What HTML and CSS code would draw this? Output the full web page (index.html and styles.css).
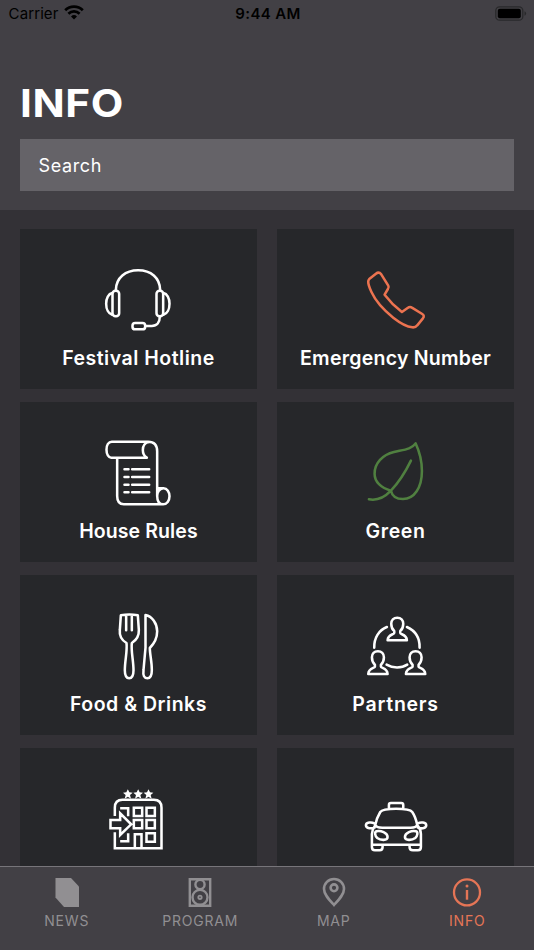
FILE: index.html
```
<!DOCTYPE html>
<html lang="en">
<head>
<meta charset="utf-8">
<title>Info</title>
<link rel="stylesheet" href="styles.css">
</head>
<body>
<div class="app">
  <header class="header">
    <div class="status">
      <div class="carrier"><span>Carrier</span>
        <svg class="wifi" width="20" height="15" viewBox="0 0 20 15"><g fill="none" stroke="#000" stroke-width="2.7"><path d="M1.2 5.3a12.4 12.4 0 0 1 17.6 0"/><path d="M4.4 8.7a8 8 0 0 1 11.2 0"/></g><path d="M10 14.6l-3-3.2a4.3 4.3 0 0 1 6 0z"/></svg>
      </div>
      <time class="time">9:44 AM</time>
      <svg class="battery" width="32" height="16" viewBox="0 0 32 16"><rect x=".8" y=".8" width="27" height="13.4" rx="3.8" fill="none" stroke="#29292b" stroke-width="1.3"/><rect x="2.8" y="2.7" width="23" height="9.6" rx="2" fill="#000"/><path d="M29.5 5.2q1.6.6 1.6 2.3t-1.6 2.3z" fill="#29292b"/></svg>
    </div>
    <h1 class="title">INFO</h1>
    <div class="search"><span>Search</span></div>
  </header>
  <main class="grid">
    <section class="card">
      <svg class="icon" viewBox="-4.5 -3 300 270"><path d="M79 105C80 68 108 46 146 46s65 22 66 59M68 114c-11 2-18 16-18 32s7 30 18 33M222 114c11 2 18 16 18 32s-7 30-18 33M211 184c0 18-9 29-24 29h-19"/><rect x="69" y="107" width="20" height="77" rx="9"/><rect x="201" y="107" width="20" height="77" rx="9"/><rect x="129" y="204" width="38" height="19" rx="8"/></svg>
      <h2 class="label hotline">Festival Hotline</h2>
    </section>
    <section class="card">
      <svg class="icon orange" viewBox="-12.75 -3 300 270"><path d="M58 71l19-15q9-7 16 2l21 34q3 5-1 10l-10 17q22 29 52 52l17-12q7-5 13-1l31 19q8 5 2 13l-17 21q-5 7-15 6c-19-2-39-15-57-29-29-23-53-50-65-76-6-13-11-25-10-33q1-5 4-8z"/></svg>
      <h2 class="label emergency">Emergency Number</h2>
    </section>
    <section class="card">
      <svg class="icon" viewBox="-4.5 6 300 270"><path d="M172 98H65c-8 0-14-10-14-24s6-24 16-24h109c18 0 27 10 27 29v133c0 16 6 26 18 26H103c-14 0-20-9-20-25V99M179 51c-12 1-19 11-19 24 0 11 4 18 12 23M204 190h18c11 0 18 11 18 24s-8 24-19 24M221 190c-11 2-18 12-18 24"/><path d="M105 133h12M128 133h51M105 156h12M128 156h51M105 179h12M128 179h51M105 202h12M128 202h51"/></svg>
      <h2 class="label rules">House Rules</h2>
    </section>
    <section class="card">
      <svg class="icon green" viewBox="-12.75 5 300 270"><path d="M56 222c26 5 49-8 66-26 21-22 43-55 60-90M122 196C92 188 73 169 73 145c0-31 24-57 58-65 30-7 53-8 65-26 12 26 19 54 19 83 0 50-23 84-57 84-18 0-32-8-36-25z"/></svg>
      <h2 class="label leaf">Green</h2>
    </section>
    <section class="card">
      <svg class="icon" viewBox="-4.5 -1 300 270"><path d="M94 45c16-3 35-3 51 0l3 44c1 19-7 30-21 39-3 24 5 52 5 82 0 16-3 24-13 24s-13-8-13-24c0-30 8-58 5-82-14-8-22-20-20-39zM110 47v43M127 47v43"/><path d="M168 44c20 4 35 25 35 49 0 23-11 39-22 50 0 20 6 40 6 66 0 17-4 25-13 25-10 0-14-8-12-25l6-67z"/></svg>
      <h2 class="label food">Food &amp; Drinks</h2>
    </section>
    <section class="card">
      <svg class="icon" viewBox="-12.75 -1 300 270"><defs><path id="person" d="M0 0c11 0 18 7 18 18 0 10-3 17-9 22v6c0 5 19 3 20 22h-58c1-19 20-17 20-22v-6c-6-5-9-12-9-22C-18 7-11 0 0 0z"/></defs><use href="#person" x="141" y="52"/><use href="#person" x="83" y="153"/><use href="#person" x="196" y="153"/><path d="M72 142c-1-29 14-53 38-62M170 80c24 11 39 33 38 62M109 193c18 11 45 11 62 0"/></svg>
      <h2 class="label partner">Partners</h2>
    </section>
    <section class="card">
      <svg class="icon square" viewBox="-4.5 -22 300 270"><path d="M76 107V82q0-24 23-24h94q23 0 23 24v122H76v-48M136 203v-41h20v41M92 84h24v24M92 183h24v-24"/><path d="M133 82h25v25h-25zM171 82h25v25h-25zM133 119h25v25h-25zM171 119h25v25h-25zM171 159h25v25h-25zM63 119h29v-20l33 33-33 32v-20H63z"/><g class="stars"><path id="star" d="M115 27l4.500 9 10 1-8 7 3 11-9.500-6-9.500 6 3-11-8-7 10-1z"/><use href="#star" x="31"/><use href="#star" x="62"/></g></svg>
    </section>
    <section class="card">
      <svg class="icon" viewBox="-12.75 -21 300 270"><path d="M116 84v-9q0-6 6-6h31q6 0 6 6v9M75 135c3-14 9-29 15-39 9-13 86-13 96 0 7 10 12 25 15 39-3 8-13 8-20 8H96c-8 0-18 0-21-8zM72 130c-7-4-25-4-25 6 0 11 18 10 26 7M203 130c7-4 25-4 25 6 0 11-18 10-25 7M74 137c-6 8-9 13-9 25v39q0 10 9 10h14q9 0 9-9v-8M202 137c7 8 10 13 10 25v39q0 10-9 10h-15q-10 0-10-9v-8M66 194h145"/><path d="M79 154c12-3 33 4 33 17 0 12-22 10-31 3-7-6-9-18-2-20zM197 154c-12-3-33 4-33 17 0 12 22 10 31 3 7-6 9-18 2-20z"/></svg>
    </section>
  </main>
  <nav class="tabs">
    <a class="tab"><svg width="30" height="30" viewBox="0 0 30 30"><path d="M3.5 1H19l8 8.500V30H12L3.500 20.500z" fill="currentColor"/></svg><span>NEWS</span></a>
    <a class="tab"><svg width="30" height="30" viewBox="0 0 30 30"><g fill="none" stroke="currentColor" stroke-width="2.4"><path d="M4.800 2.200h20.400v26.600H4.800z"/><circle cx="15" cy="7.500" r="4.600"/><circle cx="15" cy="20.300" r="7.500"/><circle cx="15" cy="20.300" r="1.700" stroke-width="1.800"/></g></svg><span>PROGRAM</span></a>
    <a class="tab"><svg width="30" height="30" viewBox="0 0 30 30"><g fill="none" stroke="currentColor" stroke-width="2.6"><path d="M15 28C10 22.500 5 17.400 5 12a10 10 0 0 1 20 0c0 5.400-5 10.500-10 16z"/><circle cx="15" cy="10.800" r="3.400"/></g></svg><span>MAP</span></a>
    <a class="tab active"><svg width="30" height="30" viewBox="0 0 30 30"><circle cx="15" cy="15.400" r="13" fill="none" stroke="currentColor" stroke-width="2.300"/><path d="M15 13v9.700" stroke="currentColor" stroke-width="2.400"/><circle cx="15" cy="9" r="1.500" fill="currentColor"/></svg><span>INFO</span></a>
  </nav>
</div>
</body>
</html>
```
FILE: styles.css
```
* { box-sizing: border-box; }
body { margin: 0; background: #333136; font-family: Inter, "Liberation Sans", sans-serif; color: #fff; }
.app { width: 534px; height: 950px; display: flex; flex-direction: column; overflow: hidden; }
.header { height: 210px; flex: none; background: #424045; padding: 0 19.6px; }
.status { height: 28px; margin: 0 -13px 0 -11px; display: grid; grid-template-columns: 1fr auto 1fr; align-items: center; color: #000; font-size: 15px; line-height: 28px; }
.carrier { display: flex; align-items: center; gap: 6px; letter-spacing: .1px; }
.wifi { margin-top: -3px; }
.time { font-weight: 600; letter-spacing: .35px; }
.battery { justify-self: end; margin-top: -1px; }
.title { margin: 51px 0 0; height: 48px; line-height: 48px; font-size: 38.5px; font-weight: 650; letter-spacing: .5px; transform: scaleX(1.1); transform-origin: 0 50%; }
.search { margin-top: 12px; height: 52px; background: #656368; padding-left: 19px; font-size: 18px; line-height: 53px; letter-spacing: .6px; }
.grid { flex: 1; min-height: 0; overflow: hidden; display: grid; grid-template-columns: 1fr 1fr; grid-auto-rows: 160px; gap: 12.9px 19.4px; padding: 19.4px 19.6px 0; }
.card { background: #26272a; display: flex; flex-direction: column; align-items: center; padding-top: 25px; }
.icon { display: block; width: 100px; height: 90px; flex: none; fill: none; stroke: #fff; stroke-width: 7.6; stroke-linecap: round; stroke-linejoin: round; }
.orange { stroke: #ec7350; }
.green { stroke: #508040; }
.square { stroke-linecap: butt; stroke-linejoin: miter; }
.stars { fill: #fff; stroke: none; }
.label { margin: 0; height: 28px; line-height: 28px; font-size: 19.5px; font-weight: 600; white-space: nowrap; }
.hotline { letter-spacing: .5px; }
.emergency { letter-spacing: .25px; }
.rules { letter-spacing: .1px; }
.leaf { letter-spacing: .65px; }
.food { letter-spacing: .5px; }
.partner { letter-spacing: .75px; }
.tabs { height: 84px; flex: none; border-top: 1.5px solid #77757a; background: #424045; display: grid; grid-template-columns: repeat(4, 1fr); color: #918f92; }
.tab { display: flex; flex-direction: column; align-items: center; padding-top: 10px; font-size: 14px; line-height: 20px; }
.tab span { margin-top: 4px; letter-spacing: .8px; }
.tab.active { color: #e57556; }
```
